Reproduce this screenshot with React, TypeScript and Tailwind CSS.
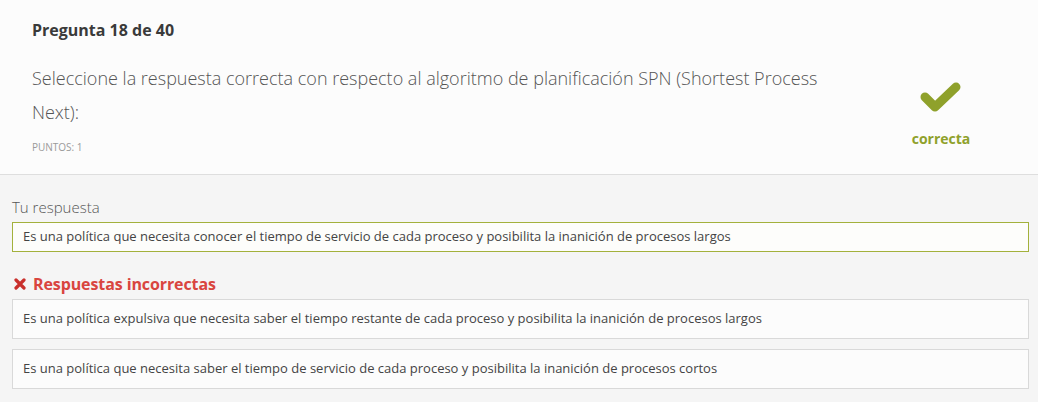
import React from "react";

const font = { fontFamily: '"Open Sans", "Noto Sans", sans-serif' };

const AnswerBox = ({ text, correct }: { text: string; correct?: boolean }) => (
  <div
    className={
      correct
        ? "border border-[#a3b13c] bg-[#fdfdfb] px-[10px] h-[30px] flex items-center text-[13px] text-[#444]"
        : "border border-[#d9d9d9] bg-[#fcfcfc] px-[10px] h-[40px] flex items-center text-[13px] text-[#444]"
    }
  >
    {text}
  </div>
);

const App = () => {
  return (
    <div className="w-[1038px] h-[402px] bg-[#f5f5f5] overflow-hidden" style={font}>
      {/* question header */}
      <div className="bg-[#fcfcfc] border-b border-[#dedede] h-[175px] flex">
        <div className="flex-1 pl-[32px] pt-[19px]">
          <p className="text-[16px] font-bold text-[#3a3a3a] leading-[22px]">Pregunta 18 de 40</p>
          <p className="mt-[20px] text-[18px] font-light text-[#555] leading-[34px] w-[800px]">
            Seleccione la respuesta correcta con respecto al algoritmo de planificación SPN (Shortest Process Next):
          </p>
          <p className="mt-[11px] text-[10px] text-[#9a9a9a] leading-[14px]">PUNTOS: 1</p>
        </div>
        <div className="w-[190px] flex flex-col items-center pt-[82px] pr-[4px]">
          <svg width="44" height="34" viewBox="0 0 44 34">
            <polyline
              points="6,15 16,25 37,5"
              fill="none"
              stroke="#8fa12b"
              strokeWidth="9"
              strokeLinecap="round"
              strokeLinejoin="round"
            />
          </svg>
          <span className="mt-[14px] text-[14px] font-bold text-[#8fa12b] leading-[18px]">correcta</span>
        </div>
      </div>

      {/* answers */}
      <div className="px-[12px] pr-[9px] pt-[22px]">
        <p className="text-[15px] font-light text-[#555] leading-[20px] mb-[5px]">Tu respuesta</p>
        <AnswerBox
          correct
          text="Es una política que necesita conocer el tiempo de servicio de cada proceso y posibilita la inanición de procesos largos"
        />
        <div className="flex items-center gap-[7px] mt-[22px] mb-[5px] pl-[2px]">
          <svg width="12" height="12" viewBox="0 0 12 12">
            <path d="M2 2 L10 10 M10 2 L2 10" stroke="#c9302c" strokeWidth="3.2" strokeLinecap="round" />
          </svg>
          <span className="text-[16px] font-bold text-[#d9453f] leading-[20px] tracking-[-0.1px]">Respuestas incorrectas</span>
        </div>
        <div className="flex flex-col gap-[10px]">
          <AnswerBox text="Es una política expulsiva que necesita saber el tiempo restante de cada proceso y posibilita la inanición de procesos largos" />
          <AnswerBox text="Es una política que necesita saber el tiempo de servicio de cada proceso y posibilita la inanición de procesos cortos" />
        </div>
      </div>
    </div>
  );
};

export default App;
